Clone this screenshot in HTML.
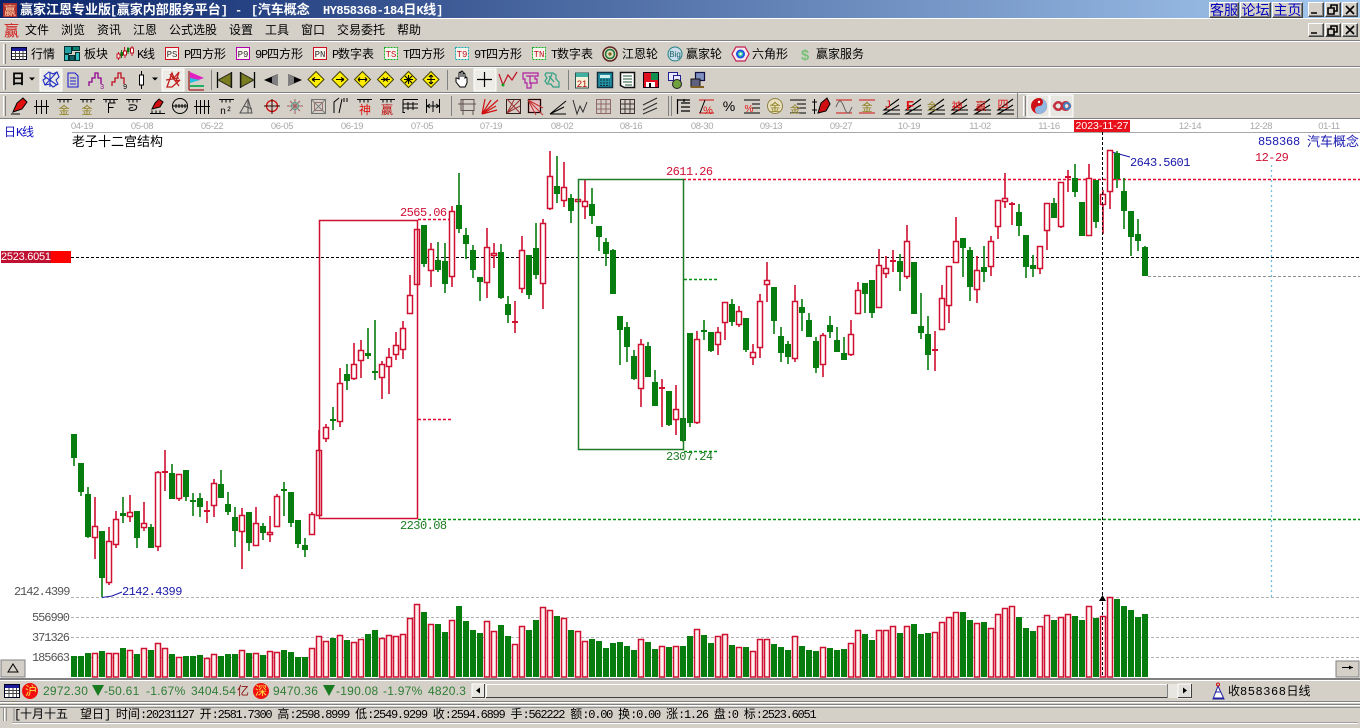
<!DOCTYPE html>
<html><head><meta charset="utf-8"><title>赢家江恩专业版</title>
<style>
html,body{margin:0;padding:0;background:#d4d0c8}
body{position:relative;width:1360px;height:728px;overflow:hidden;font:12px/14px "WenQuanYi Zen Hei","Noto Sans CJK SC",sans-serif;color:#000}
.t{position:absolute;white-space:pre;line-height:14px;font-size:12px}
.t b,b.m{font:12px/14px "Liberation Mono",monospace;letter-spacing:-1.23px;font-weight:normal}
.m{position:absolute;white-space:pre;font:12px/14px "Liberation Mono",monospace;letter-spacing:-.55px}
.d{position:absolute;top:121px;width:40px;text-align:center;font:9.5px/11px "Liberation Sans",sans-serif;letter-spacing:-.4px;color:#a8a8a8}
.r{position:absolute;left:0;width:1360px;box-sizing:border-box;background:#d4d0c8;border-top:1px solid #fff;border-bottom:1px solid #808080}
.w{position:absolute;box-sizing:border-box;background:#d4d0c8;border:1px solid;border-color:#fff #404040 #404040 #fff;box-shadow:inset -1px -1px 0 #808080;font-size:14px;line-height:14px;color:#0000c0;text-align:center}
.g{position:absolute;white-space:pre;font:12px/14px "Liberation Sans",sans-serif;letter-spacing:.25px;color:#2f7d35}
.bt{position:absolute;font:bold 13px/15px "WenQuanYi Zen Hei","Noto Sans CJK SC",sans-serif;color:#fff;white-space:pre;top:1px}
.bt b{font:bold 12px/15px "Liberation Mono",monospace;letter-spacing:-.5px}
svg{position:absolute;left:0;top:0}
</style></head><body>
<div style="position:absolute;left:0;top:0;width:1360px;height:18px;background:linear-gradient(90deg,#0a246a,#a6caf0)"></div>
<div class="bt" style="left:20px">赢家江恩专业版</div>
<div class="bt" style="left:110px"><b>[</b>赢家内部服务平台<b>]</b></div>
<div class="bt" style="left:235px"><b>-</b></div>
<div class="bt" style="left:251px"><b>[</b>汽车概念</div>
<div class="bt" style="left:323px"><b>HY858368-184</b>日<b>K</b>线<b>]</b></div>
<div class="r" style="top:18px;height:23px"></div>
<div class="r" style="top:41px;height:26px"></div>
<div class="r" style="top:67px;height:26px"></div>
<div class="r" style="top:93px;height:26px"></div>
<div style="position:absolute;left:0;top:119px;width:1360px;height:560px;background:#fff"></div>
<div style="position:absolute;left:0;top:678px;width:1360px;height:2px;background:#808080"></div>
<div class="w" style="left:1209px;top:2px;width:30px;height:16px">客服</div>
<div class="w" style="left:1240px;top:2px;width:31px;height:16px">论坛</div>
<div class="w" style="left:1272px;top:2px;width:31px;height:16px">主页</div>
<div class="w" style="left:1308px;top:2px;width:16px;height:15px"></div>
<div class="w" style="left:1325px;top:2px;width:16px;height:15px"></div>
<div class="w" style="left:1342px;top:2px;width:16px;height:15px"></div>
<div class="w" style="left:1308px;top:23px;width:16px;height:14px"></div>
<div class="w" style="left:1325px;top:23px;width:16px;height:14px"></div>
<div class="w" style="left:1342px;top:23px;width:16px;height:14px"></div>
<div class="t" style="left:25px;top:23px">文件</div><div class="t" style="left:61px;top:23px">浏览</div><div class="t" style="left:97px;top:23px">资讯</div><div class="t" style="left:133px;top:23px">江恩</div><div class="t" style="left:169px;top:23px">公式选股</div><div class="t" style="left:229px;top:23px">设置</div><div class="t" style="left:265px;top:23px">工具</div><div class="t" style="left:301px;top:23px">窗口</div><div class="t" style="left:337px;top:23px">交易委托</div><div class="t" style="left:397px;top:23px">帮助</div>
<div class="t" style="left:31px;top:47px">行情</div><div class="t" style="left:84px;top:47px">板块</div><div class="t" style="left:137px;top:47px"><b>K</b>线</div><div class="t" style="left:184px;top:47px"><b>P</b>四方形</div><div class="t" style="left:255px;top:47px"><b>9P</b>四方形</div><div class="t" style="left:332px;top:47px"><b>P</b>数字表</div><div class="t" style="left:403px;top:47px"><b>T</b>四方形</div><div class="t" style="left:474px;top:47px"><b>9T</b>四方形</div><div class="t" style="left:551px;top:47px"><b>T</b>数字表</div><div class="t" style="left:622px;top:47px">江恩轮</div><div class="t" style="left:686px;top:47px">赢家轮</div><div class="t" style="left:752px;top:47px">六角形</div><div class="t" style="left:816px;top:47px">赢家服务</div>
<div class="t" style="left:11px;top:72px;font-size:14px;font-weight:bold">日</div>
<svg width="1360" height="728" viewBox="0 0 1360 728">
<!-- window glyphs -->
<g fill="none" stroke="#000" stroke-width="1.6">
<path d="M1311 13h6M1328 8h6v6h-6zM1331 8v-3h6v6h-3M1346 6l8 8M1354 6l-8 8"/>
<path d="M1311 33h6M1328 29h6v6h-6zM1331 29v-3h6v6h-3M1346 26l8 8M1354 26l-8 8"/>
</g>
<rect x="3" y="3" width="14" height="14" fill="#b03030"/><text x="4" y="15" font-size="12" fill="#ffd0a0" font-family="WenQuanYi Zen Hei,sans-serif">赢</text>
<text x="4" y="36" font-size="15" fill="#d01818" font-family="Noto Sans CJK SC,sans-serif">赢</text>
<!-- grippers -->
<g fill="#fff"><rect x="3" y="44" width="1" height="20"/><rect x="3" y="70" width="1" height="20"/><rect x="3" y="96" width="1" height="20"/><rect x="1023" y="96" width="1" height="20"/></g>
<g fill="#808080"><rect x="5" y="44" width="1" height="20"/><rect x="5" y="70" width="1" height="20"/><rect x="5" y="96" width="1" height="20"/><rect x="1025" y="96" width="1" height="20"/><rect x="211" y="70" width="1" height="20"/><rect x="447" y="70" width="1" height="20"/><rect x="568" y="70" width="1" height="20"/><rect x="451" y="96" width="1" height="20"/><rect x="668" y="96" width="1" height="20"/><rect x="671" y="96" width="1" height="20"/><rect x="1017" y="93" width="1" height="26"/></g>
<!-- row1 icons -->
<rect x="11.5" y="47.5" width="15" height="12" fill="#fff" stroke="#000020"/><rect x="12" y="48" width="14" height="3" fill="#1a1a9a"/><path d="M12 53.5h14M12 56.5h14M15.5 51v9M19.5 51v9M23 51v9" stroke="#444" fill="none"/>
<g stroke="#003030"><rect x="64.5" y="46.5" width="7" height="7" fill="#20a0a0"/><rect x="72.5" y="46.5" width="7" height="4" fill="#108070"/><rect x="64.5" y="54.5" width="4" height="6" fill="#30c0c0"/><rect x="69.5" y="55.5" width="5" height="5" fill="#106060"/><rect x="75.5" y="52.5" width="4" height="8" fill="#30c0c0"/></g>
<g stroke="#c01020" fill="#fff"><path d="M118.5 52v8M125 50v8M132 46v10M124.500 47v4" fill="none"/><rect x="117" y="54" width="3" height="4"/><rect x="123.500" y="51" width="3" height="4"/><rect x="130.500" y="48" width="3" height="5"/></g><path d="M121.500 50v8M128 47v7" stroke="#0a7a10"/><rect x="120.500" y="52" width="2.500" height="4" fill="#0a7a10"/><rect x="127" y="48" width="2.500" height="4" fill="#0a7a10"/>
<g font-family="Liberation Mono,monospace" font-size="9" text-anchor="middle" fill="#505050">
<rect x="165.500" y="47.500" width="13" height="12" fill="#f8f4ee" stroke="#d01020"/><text x="172" y="57" fill="#303030">PS</text>
<rect x="236.500" y="47.500" width="13" height="12" fill="#f8f4ee" stroke="#b000b0"/><text x="243" y="57" fill="#303030">P9</text>
<rect x="313.500" y="47.500" width="13" height="12" fill="#f8f4ee" stroke="#d01020"/><text x="320" y="57" fill="#303030">PN</text>
<rect x="384.500" y="47.500" width="13" height="12" fill="#f8f4ee" stroke="#10b020" stroke-dasharray="2 1"/><text x="391" y="57" fill="#c01020">TS</text>
<rect x="455.500" y="47.500" width="13" height="12" fill="#f8f4ee" stroke="#10b0b0" stroke-dasharray="2 1"/><text x="462" y="57" fill="#c01020">T9</text>
<rect x="532.500" y="47.500" width="13" height="12" fill="#f8f4ee" stroke="#10b020" stroke-dasharray="2 1"/><text x="539" y="57" fill="#c01020">TN</text>
</g>
<circle cx="610" cy="54" r="7" fill="#ddb" stroke="#602020" stroke-width="1.500"/><circle cx="610" cy="54" r="4.500" fill="none" stroke="#207040" stroke-width="1.500"/><circle cx="610" cy="54" r="1.600" fill="#806020"/>
<circle cx="675" cy="54" r="7" fill="#cde" stroke="#208080"/><text x="675" y="57" font-size="8" text-anchor="middle" fill="#106060" font-family="Liberation Sans,sans-serif">Big</text>
<path d="M736 47h9l4 7-4 7h-9l-4-7z" fill="#f8e8f0" stroke="#c02050" stroke-width="1.200"/><circle cx="740.500" cy="54" r="4.500" fill="#2050e0"/><circle cx="740.500" cy="54" r="2.600" fill="#40d0a0"/><circle cx="740.500" cy="54" r="1.200" fill="#ffe"/>
<text x="805" y="60" font-size="15" font-weight="bold" text-anchor="middle" fill="#78c078" font-family="Liberation Sans,sans-serif">$</text>
<!-- row2 -->
<path d="M29 77.500h6l-3 3z" fill="#000"/><path d="M152 77.500h6l-3 3z" fill="#000"/>
<rect x="40" y="69" width="22" height="22" fill="#eeece6" stroke="#fff"/><rect x="162" y="69" width="22" height="22" fill="#eeece6" stroke="#fff"/><rect x="474" y="69" width="22" height="22" fill="#eeece6" stroke="#fff"/>
<path d="M44 76l5-4 4 2 4-2 2 5-3 3 2 4-5 3-3-3-5 1-2-5 3-2zM44 76l13 9M57 72l-12 13M50 73v14" fill="none" stroke="#2030c0" stroke-width="1.100"/>
<path d="M68 73h7l3 3v11H68zM70 78h6M70 81h6M70 84h6" fill="none" stroke="#2020d0" stroke-width="1.100"/>
<path d="M89 86v-4h3v-4h3v-5h3v5h3v6" fill="none" stroke="#900090" stroke-width="1.300"/><text x="100" y="89" font-size="7" fill="#900090" font-family="Liberation Mono,monospace">3</text>
<path d="M112 86v-4h3v-4h3v-5h3v5h3v6" fill="none" stroke="#c01020" stroke-width="1.300"/><text x="123" y="89" font-size="7" fill="#000" font-family="Liberation Mono,monospace">9</text>
<path d="M141.500 71v4M141.500 85v4" stroke="#000"/><rect x="139.500" y="75" width="4" height="10" fill="#fff" stroke="#000"/>
<path d="M167 87l5-14 2 5 5-6-3 9 4-1-8 7zM170 74l9 12M166 80l13-2" fill="none" stroke="#c02020" stroke-width="1.300"/>
<path d="M189 71v19M189 90h15" stroke="#a02020" stroke-width="1.300" fill="none"/><path d="M190 72l14 6-14 5z" fill="#e020c0"/><path d="M190 78l10 2-10 3z" fill="#20c0e0"/><path d="M190 85h14v2h-14z" fill="#20b060"/>
<path d="M217.500 72v16M231.500 72v16" stroke="#000" stroke-width="1.300" fill="none"/><path d="M231 73v14l-13-7z" fill="#7c7c20" stroke="#303020"/><path d="M240.500 72v16M254.500 72v16" stroke="#000" stroke-width="1.300" fill="none"/><path d="M241 73v14l13-7z" fill="#7c7c20" stroke="#303020"/>
<path d="M264 80l14-6v12z" fill="#000"/><path d="M272 77l6-3v12l-6-3z" fill="#808080"/><path d="M288 74l14 6-14 6z" fill="#000"/><path d="M288 74l6 3v6l-6 3z" fill="#808080"/>
<g fill="#ffee00" stroke="#404000"><path d="M316 71.500l8 8-8 8-8-8z"/><path d="M340 71.500l8 8-8 8-8-8z"/><path d="M362.500 71.500l8 8-8 8-8-8z"/><path d="M385.500 71.500l8 8-8 8-8-8z"/><path d="M408.500 71.500l8 8-8 8-8-8z"/><path d="M431 71.500l8 8-8 8-8-8z"/></g>
<g fill="none" stroke="#000" stroke-width="1.100"><path d="M312 79.500h8M312 79.500l3-2M312 79.500l3 2"/><path d="M336 79.500h8M344 79.500l-3-2M344 79.500l-3 2"/><path d="M358 79.500h9M358 79.500l2-2M358 79.500l2 2M367 79.500l-2-2M367 79.500l-2 2"/><path d="M381 79.500h9M383 77.500l5 4M383 81.500l5-4"/><path d="M404 79.500h9M408.500 75v9M405 76l7 7M412 76l-7 7"/><path d="M431 75v9M427 79.500h8M431 75l-2 2M431 75l2 2M431 84l-2-2M431 84l2-2"/></g>
<path d="M456 78v4l4 5h5l2-4v-5l-1-1-1 1v-4l-1-1-1 1v3-5l-1-1-1 1v5-4l-1-1-1 1v6l-2-1z" fill="#fff" stroke="#000"/>
<path d="M484.500 72v15M477 79.500h15" stroke="#000" stroke-width="1.200"/>
<path d="M499 74l4 11 5-10 4 5 5-8" fill="none" stroke="#c01020" stroke-width="1.200"/><circle cx="503" cy="85" r="1.500" fill="#10a020"/>
<path d="M523 73h15v3h-3v3h2v4h-6v5h-4v-5h-2v-4h-2zM526 76h8M530 76v8" fill="none" stroke="#b020a0" stroke-width="1.200"/>
<path d="M546 73h7l3 2v4l3 3v5h-6l-2-3h-4l-2-3 2-3-2-3zM549 76l5 6M552 74l-4 9" fill="none" stroke="#30a080" stroke-width="1.200"/>
<rect x="575.500" y="73" width="13" height="15" fill="#f8f0d8" stroke="#305050"/><rect x="576" y="73" width="12" height="4" fill="#40b0a0"/><text x="582" y="87" text-anchor="middle" font-size="9.500" font-family="Liberation Sans,sans-serif" fill="#b01010">21</text>
<rect x="597.500" y="72.500" width="15" height="15" fill="#2090a0" stroke="#103040" stroke-width="1.500"/><rect x="600" y="75" width="10" height="3" fill="#d0f0f0"/><path d="M600 80h10M600 83h10M600 85.500h10" stroke="#103040" stroke-dasharray="2 1"/>
<path d="M620.500 72.500h14v15h-10l-4-2z" fill="#fff" stroke="#101010" stroke-width="1.500"/><path d="M623 76h9M623 79h9M623 82h9M625 85h7" stroke="#205030"/>
<rect x="643.500" y="72.500" width="15" height="15" fill="#e01020" stroke="#100010"/><rect x="651" y="73" width="7" height="7" fill="#109050"/><rect x="646" y="82" width="9" height="5" fill="#fff"/><rect x="649" y="83" width="2" height="4" fill="#000"/>
<rect x="668.500" y="72.500" width="9" height="8" fill="#e8e8ff" stroke="#202090"/><rect x="673.500" y="75.500" width="7" height="6" fill="#e8e8ff" stroke="#202090"/><circle cx="677" cy="84" r="4.500" fill="#70a040" stroke="#202020"/>
<rect x="695.500" y="72.500" width="9" height="8" fill="#8090c0" stroke="#101040" stroke-width="1.200"/><rect x="691" y="79" width="9" height="8" fill="#606080" stroke="#101010"/><path d="M691 87h13" stroke="#806020" stroke-width="2"/>
<!-- row3 -->
<g font-family="WenQuanYi Zen Hei,Noto Sans CJK SC,sans-serif" text-anchor="middle">
<path d="M13 112l4-9 6-5 4 4-5 7z" fill="#e01010" stroke="#000"/><path d="M11 114h9" stroke="#000"/>
<path d="M36.500 100v14M41.500 100v14M46.500 100v14M34 106.500h15M57 99.500h15M60 99.500v3M64 99.500v3M68 99.500v3M80 99.500h15M83 99.500v3M87 99.500v3M91 99.500v3" stroke="#000" fill="none"/>
<text x="64" y="114" font-size="11" fill="#908020">金</text><text x="87" y="114" font-size="11" fill="#908020">金</text>
<path d="M103 99.500h15M106 99.500v3M110 99.500v3M114 99.500v3M108.500 103v10M108.500 103h7M108.500 107.500h5M126 99.500h15M129 99.500v3M133 99.500v3M137 99.500v3M129 105c7 -1 9 1 7 4-2 2-7 2-7 0 0-1 3-2 4-1" stroke="#000" fill="none"/>
<path d="M152 109l3-6 4-4 4 3-3 5z" fill="#d01010" stroke="#000"/><path d="M150 113.500h15M152 113.500v-3M156 113.500v-3M160 113.500v-3" stroke="#000" fill="none"/>
<circle cx="180" cy="106" r="7.500" fill="none" stroke="#000"/><path d="M173 106h14M176 104v4M179 104v4M182 104v4M185 104v4M203 100v0" stroke="#000" fill="none"/>
<path d="M196.500 100v14M200.500 100v14M204.500 100v14M208.500 100v14M194 106.500h16M219 99.500h15M222 99.500v3M226 99.500v3M230 99.500v3" stroke="#000" fill="none"/><text x="226" y="114" font-size="10" fill="#000" font-family="Liberation Mono,monospace">n²</text>
<path d="M240 113l8-14 4 14zM244 106l8 3M248 99v14" fill="none" stroke="#505050"/>
<circle cx="272" cy="106" r="5.500" fill="none" stroke="#d01010" stroke-width="1.300"/><path d="M264 106h16M272 99v15" stroke="#300" /><path d="M295 99v15M287 106h16M290 101l10 10M300 101l-10 10" stroke="#a06060"/><circle cx="295" cy="106" r="3.500" fill="none" stroke="#50a090"/>
<rect x="311.500" y="99.500" width="14" height="14" fill="none" stroke="#707070"/><rect x="314.500" y="102.500" width="8" height="8" fill="none" stroke="#a07070"/><path d="M311 99l15 15M326 99l-15 15" stroke="#808080"/>
<path d="M334 113v-11l5-4M339 113l3-14M344 98v4M347 98v4" stroke="#000" fill="none"/>
<path d="M357 99.500h15M360 99.500v3M364 99.500v3M368 99.500v3M380 99.500h15M383 99.500v3M387 99.500v3M391 99.500v3M403 99.500h15M403 99.500v13h2M408 102v8M413 102v8M403 104h15M403 108h15" stroke="#000" fill="none"/><text x="365" y="114" font-size="12" fill="#e01010">神</text><text x="387" y="114" font-size="12" fill="#c01010">赢</text>
<path d="M426.500 99v14M439.500 99v14M426 106h14M427 106l3-2M427 106l3 2M439 106l-3-2M439 106l-3 2M433 101v11" stroke="#000" fill="none"/>
<path d="M461 99.500h13v11h-13zM463 99v16M473 110v5M458 104h18" stroke="#605050" fill="none"/>
<path d="M482 114l16-14M482 114l14-8M482 114l15-4M482 114l9-14M482 114l3-15" stroke="#d01010" stroke-width="1.200"/>
<path d="M506.500 99.500h14v14h-14z" fill="none" stroke="#302020"/><path d="M507 113l13-13M507 113l13-7M507 113l7-13M507 99l13 14" stroke="#a03030"/>
<path d="M528.500 99.500h12v13h-12z" fill="#e8c0c0" stroke="#200000" stroke-width="1.300"/><path d="M528 100l15 15M528 100l15 8M528 100l8 15" stroke="#c03030"/>
<path d="M550 114l16-13M550 114l14-7M550 114h16" stroke="#000" fill="none"/><path d="M573 100l4 14 3-8 3 6 4-10" stroke="#303030" fill="none"/>
<path d="M596.500 99.500h14v14h-14zM601 99v15M606 99v15M596 104h15M596 109h15" stroke="#906868" fill="none"/><path d="M620.500 99.500h14v14h-14zM625 99v15M630 99v15M620 104h15M620 109h15" stroke="#403030" fill="none"/>
<path d="M643 105l14-7M643 110l14-7M643 114l14-6" stroke="#303030" fill="none" stroke-width="1.200"/>
<path d="M677.500 99v15M677 100h13M681 103h9M681 107h9M681 111h9M684 99v3" stroke="#000" fill="none" stroke-width="1.200"/>
<path d="M699 100h15M699 113h15" stroke="#d01010"/><path d="M705 100l-5 13" stroke="#000"/><text x="708" y="114" font-size="11" fill="#e01010" font-family="Liberation Sans,sans-serif">%</text>
<text x="729" y="111" font-size="14" fill="#000" font-family="Liberation Sans,sans-serif">%</text>
<path d="M744 100h16M752 104h8M752 108h8M744 113h16" stroke="#000"/><text x="749" y="112" font-size="10" fill="#e01010" font-family="Liberation Sans,sans-serif">%</text>
<circle cx="775" cy="106" r="7.500" fill="#e8e0c0" stroke="#908040"/><text x="775" y="111" font-size="11" fill="#908020">金</text>
<path d="M790 100h16M797 104h9M797 108h9M790 113h16" stroke="#000"/><text x="795" y="113" font-size="10" fill="#908020">金</text>
<path d="M814.500 99v15M812 102h5M812 110h5" stroke="#000"/><path d="M818 113l3-10 6-5 3 6-4 7z" fill="#d01010" stroke="#000"/>
<path d="M836 100h16M836 113h16" stroke="#d01010"/><path d="M836 107c3-8 5-8 8 0s5 8 8 0" stroke="#606060" fill="none"/>
<path d="M859 100h16M859 113h16" stroke="#d01010"/><text x="867" y="111" font-size="11" fill="#908020">金</text>
<path d="M899 99l-15 11 16 0M899 105l-15 9 16 0" stroke="#000" fill="none" stroke-width="1.100"/><text x="888" y="108" font-size="11" fill="#e01010" font-family="Liberation Sans,sans-serif">J</text>
<path d="M921 99l-15 11 16 0M921 105l-15 9 16 0" stroke="#000" fill="none" stroke-width="1.100"/><text x="910" y="110" font-size="13" font-weight="bold" fill="#e01010" font-family="Liberation Sans,sans-serif">F</text>
<path d="M944 99l-15 11 16 0M944 105l-15 9 16 0" stroke="#000" fill="none" stroke-width="1.100"/><text x="932" y="110" font-size="10" fill="#908020">金</text>
<path d="M967 99l-15 11 16 0M967 105l-15 9 16 0" stroke="#000" fill="none" stroke-width="1.100"/><text x="957" y="110" font-size="11" fill="#e01010">神</text>
<path d="M990 99l-15 11 16 0M990 105l-15 9 16 0" stroke="#000" fill="none" stroke-width="1.100"/><text x="981" y="110" font-size="11" fill="#d01010">赢</text>
<path d="M1013 99l-15 11 16 0M1013 105l-15 9 16 0" stroke="#000" fill="none" stroke-width="1.100"/><text x="1003" y="108" font-size="11" fill="#e01010">四</text>
</g>
<rect x="1027" y="95" width="22" height="22" fill="#e8e6e0" stroke="#fff"/><rect x="1050" y="95" width="23" height="22" fill="#e8e6e0" stroke="#fff"/>
<circle cx="1039" cy="106" r="8" fill="#d01018"/><path d="M1039 98a8 8 0 0 1 0 16a4 4 0 0 1 0-8a4 4 0 0 0 0-8z" fill="#90b8e0"/><circle cx="1039" cy="102" r="1.200" fill="#fff"/>
<path d="M1054 106c2-5 7-5 8 0s6 5 8 0c-2-5-7-5-8 0s-6 5-8 0z" fill="none" stroke="#c03040" stroke-width="2.500"/><circle cx="1067" cy="106" r="3" fill="none" stroke="#4080c0" stroke-width="2"/>
<!-- chart lines -->
<rect x="1074" y="120" width="56" height="12" fill="#e8101a"/>
<path d="M72 132.500H1360" stroke="#a8a8a8" fill="none"/>
<g fill="none" stroke-dasharray="3 2">
<path d="M71 257.500H1360" stroke="#000"/>
<path d="M683 179.500H1360" stroke="#e8002c" stroke-width="1.500"/>
<path d="M418 519.500H1360" stroke="#009010" stroke-width="1.500"/>
<path d="M418 219.500H450M418 419.500H452" stroke="#e8002c" stroke-width="1.500"/>
<path d="M684 279.500H718M684 451.500H718" stroke="#009010" stroke-width="1.500"/>
<path d="M1148 276.500H1360" stroke="#909090"/>
<path d="M71 597.500H1360M71 617.500H1360M71 637.500H1360M71 657.500H1360" stroke="#b0b0b0"/>
<path d="M1271.500 165V597" stroke="#70c0e0" stroke-dasharray="2 3" stroke-width="1.300"/>
</g>
<path d="M102 597.500L112 596 122 592M1108 151l22 6" fill="none" stroke="#1818a8"/>
<g id="k"></g>
<rect x="319.500" y="220.500" width="98" height="298" fill="none" stroke="#d01030" stroke-width="1.500"/>
<rect x="578.500" y="179.500" width="105" height="270" fill="none" stroke="#1f7a28" stroke-width="1.500"/>
<path d="M1102.500 132V677" stroke="#000" stroke-dasharray="3 2" fill="none"/><path d="M1099 601l3.500-6 3.500 6z" fill="#000"/>
<!-- buttons -->
<rect x="1" y="660" width="24" height="17" fill="#d4d0c8" stroke="#808080"/><path d="M8 672l5-8 5 8z" fill="none" stroke="#000"/>
<rect x="1336" y="661" width="23" height="16" fill="#d4d0c8" stroke="#808080"/><path d="M1342 667.500h11" stroke="#000" fill="none"/><path d="M1353 667.500l-4-2v4z" fill="#000"/>
<!-- status bars -->
<rect x="0" y="680" width="1360" height="48" fill="#d4d0c8"/>
<path d="M0 680.500H1360M0 702.500H1360M0 705.500H1360" stroke="#fff" fill="none"/><path d="M0 701.500H1360M0 704.500H1360" stroke="#808080" fill="none"/>
<path d="M0 707.500H1360M14 708v13" stroke="#909090" fill="none"/><path d="M12 723.500H1358" stroke="#fff"/><path d="M12 722.500H1358" stroke="#a0a0a0"/>
<rect x="4.500" y="684.500" width="15" height="13" fill="#fff" stroke="#000020"/><rect x="5" y="685" width="14" height="3" fill="#1a1a9a"/><path d="M5 690.500h14M5 693.500h14M9 688v9M13 688v9M16.500 688v9" stroke="#444" fill="none"/>
<circle cx="30" cy="691" r="8" fill="#f01010"/><circle cx="261" cy="691" r="8" fill="#f01010"/>
<path d="M92 685h12l-6 11z" fill="#1a7a20"/><path d="M323 685h12l-6 11z" fill="#1a7a20"/>
<rect x="472" y="684" width="13" height="14" fill="#e8e6e0" stroke="#fff"/><path d="M472 697.500h13M484.500 684v14" stroke="#404040"/><path d="M476 690.500l4-3v6z" fill="#000"/>
<path d="M486 684.500H1168M486.500 684v14" stroke="#fff" stroke-width="1"/><path d="M486 697.500H1168" stroke="#404040"/><path d="M1167.500 684v14" stroke="#808080"/>
<rect x="1168" y="684" width="10" height="14" fill="#e8e6e0"/>
<rect x="1178" y="684" width="13" height="14" fill="#e0deda" stroke="#fff"/><path d="M1178 697.500h13M1191.500 684v14" stroke="#404040"/><path d="M1187 690.500l-4-3v6z" fill="#000"/>
<path d="M1218 686l-5 13h11zM1215 692h6M1213 698h11" fill="#fff" stroke="#2020a0"/><circle cx="1218" cy="684.500" r="1.500" fill="none" stroke="#d01010"/>
<path d="M3.500 708v13M6.500 708v13" stroke="#909090" fill="none"/><path d="M4.500 708v13" stroke="#fff" fill="none"/>
</svg>
<!-- labels -->
<div class="d" style="left:62px">04-19</div><div class="d" style="left:122px">05-08</div><div class="d" style="left:192px">05-22</div><div class="d" style="left:262px">06-05</div><div class="d" style="left:332px">06-19</div><div class="d" style="left:402px">07-05</div><div class="d" style="left:471px">07-19</div><div class="d" style="left:542px">08-02</div><div class="d" style="left:611px">08-16</div><div class="d" style="left:682px">08-30</div><div class="d" style="left:751px">09-13</div><div class="d" style="left:821px">09-27</div><div class="d" style="left:889px">10-19</div><div class="d" style="left:960px">11-02</div><div class="d" style="left:1029px">11-16</div><div class="d" style="left:1170px">12-14</div><div class="d" style="left:1241px">12-28</div><div class="d" style="left:1309px">01-11</div>
<div class="d" style="left:1074px;width:56px;top:120px;color:#fff;font-size:10.500px;line-height:12px;letter-spacing:0">2023-11-27</div>
<div class="t" style="left:4px;top:125px;color:#1010c0">日<b>K</b>线</div>
<div class="t" style="left:72px;top:134px;font-size:13px">老子十二宫结构</div>
<div class="m" style="left:1258px;top:135px;color:#1818b0;letter-spacing:-.2px">858368</div>
<div class="t" style="left:1307px;top:134px;color:#1818b0;font-size:13px">汽车概念</div>
<div class="m" style="left:1255px;top:151px;color:#d01035">12-29</div>
<div class="m" style="left:1130px;top:156px;color:#1818a8">2643.5601</div>
<div class="m" style="left:122px;top:585px;color:#1818a8">2142.4399</div>
<div class="m" style="left:400px;top:206px;color:#d01035">2565.06</div>
<div class="m" style="left:666px;top:165px;color:#d01035">2611.26</div>
<div class="m" style="left:400px;top:519px;color:#1a7a20">2230.08</div>
<div class="m" style="left:666px;top:450px;color:#1a7a20">2307.24</div>
<div class="m" style="left:14px;top:585px;color:#555;letter-spacing:-1.05px">2142.4399</div>
<div class="m" style="left:32px;top:611px;color:#555;letter-spacing:-1.05px">556990</div>
<div class="m" style="left:32px;top:631px;color:#555;letter-spacing:-1.05px">371326</div>
<div class="m" style="left:32px;top:651px;color:#555;letter-spacing:-1.05px">185663</div>
<div style="position:absolute;left:1px;top:251px;width:70px;height:12px;background:#f00"></div>
<div class="m" style="left:1px;top:251px;width:50px;height:12px;overflow:hidden;background:#c01030;color:#fff;font:11px/12px 'Liberation Sans',sans-serif;letter-spacing:-.25px">2523.6051</div>
<!-- status 1 -->
<div class="t" style="left:25px;top:684px;color:#ffe040">沪</div>
<div class="t" style="left:255px;top:684px;color:#ffe040">深</div>
<div class="g" style="left:43px;top:684px">2972.30</div>
<div class="g" style="left:104px;top:684px">-50.61</div>
<div class="g" style="left:146px;top:684px">-1.67%</div>
<div class="g" style="left:191px;top:684px">3404.54</div>
<div class="t" style="left:237px;top:684px;color:#8a1010">亿</div>
<div class="g" style="left:273px;top:684px">9470.36</div>
<div class="g" style="left:336px;top:684px">-190.08</div>
<div class="g" style="left:383px;top:684px">-1.97%</div>
<div class="g" style="left:428px;top:684px">4820.3</div>
<div class="t" style="left:1228px;top:684px">收<b style="letter-spacing:.55px">858368</b>日线</div>
<div class="t" style="left:14px;top:707px"><b>[</b>十月十五<b>  </b>望日<b>] </b>时间<b>:20231127 </b>开<b>:2581.7300 </b>高<b>:2598.8999 </b>低<b>:2549.9299 </b>收<b>:2594.6899 </b>手<b>:562222 </b>额<b>:0.00 </b>换<b>:0.00 </b>涨<b>:1.26 </b>盘<b>:0 </b>标<b>:2523.6051</b></div>
<script>
var D="0 434 434 458 466 656|0 463 463 492 496 656|0 487 494 537 538 653|1 497 526 538 559 653|0 531 531 578 597 651|1 527 541 583 585 653|1 511 519 545 548 653|0 497 513 516 523 648|1 495 512 517 522 650|0 511 511 538 548 654|1 502 523 528 531 648|0 524 527 548 548 650|1 471 472 547 551 643|1 450 471 472 491 648|0 464 473 499 499 654|1 474 474 499 501 657|0 470 470 497 501 656|0 493 500 502 516 656|0 493 498 507 517 655|1 501 510 511 523 658|1 479 483 506 517 654|0 470 484 498 498 656|0 492 504 512 515 654|0 507 517 531 547 654|1 508 515 532 569 650|0 512 512 543 551 653|1 507 523 546 546 653|0 523 526 533 540 655|1 516 532 535 542 651|1 494 496 527 527 652|0 482 489 490 516 650|0 492 492 523 527 652|0 520 520 544 548 657|0 538 545 550 557 657|1 512 514 535 535 648|1 430 450 516 516 636|1 424 427 439 442 641|0 407 419 420 430 638|1 368 383 422 427 635|0 364 374 381 390 640|1 343 364 379 380 642|1 340 350 361 378 639|0 328 353 356 359 634|0 320 371 372 380 630|1 361 364 378 399 638|1 348 357 367 394 635|1 332 345 355 360 636|1 321 328 350 359 634|1 275 295 314 314 618|1 229 229 285 285 604|0 225 225 264 267 612|1 243 249 271 287 624|0 242 260 270 272 624|0 243 261 284 293 632|1 206 211 277 287 620|0 173 205 229 233 606|0 228 235 244 259 621|0 245 250 270 278 630|0 277 277 282 301 633|1 228 247 283 298 621|1 243 253 256 268 631|0 244 252 298 299 625|0 296 304 315 323 636|1 301 321 322 333 644|1 236 250 289 293 626|0 255 255 295 299 630|0 223 248 275 279 620|1 219 223 284 309 607|1 151 176 209 210 610|0 156 186 194 203 616|1 162 187 201 207 618|0 194 198 211 223 630|1 199 199 202 202 631|1 179 201 207 219 641|0 188 204 216 224 639|0 226 226 237 251 641|0 238 242 254 266 648|0 249 250 294 294 643|0 316 316 330 365 642|0 322 327 347 362 646|0 350 356 379 380 650|1 339 344 389 407 639|0 342 346 377 377 642|0 370 382 406 406 649|1 379 387 388 427 646|0 391 391 425 426 647|1 385 409 420 435 646|0 418 418 441 442 646|0 333 333 423 427 636|1 331 339 423 424 629|0 320 330 331 340 635|0 332 332 351 352 643|1 327 332 345 355 636|1 302 302 323 340 634|0 299 304 322 326 645|1 306 311 325 327 647|0 318 318 350 352 647|1 344 352 358 365 651|1 294 301 348 358 639|1 262 280 285 302 639|0 287 287 321 334 644|0 327 336 353 362 647|0 341 344 357 364 650|1 285 301 359 362 636|0 299 307 313 331 646|0 313 320 337 337 650|0 337 341 368 373 651|1 333 335 365 377 647|0 316 325 332 338 648|0 327 340 352 352 650|0 337 353 360 360 649|1 320 334 355 356 643|1 282 290 314 314 630|0 283 283 294 313 634|0 280 280 313 318 640|1 249 265 308 308 630|1 256 268 274 278 630|1 250 260 261 272 626|0 254 261 272 291 633|1 225 241 277 279 626|0 262 262 314 314 624|0 293 326 333 339 634|0 316 334 355 370 633|1 331 349 350 371 632|1 285 298 330 330 622|1 266 266 306 323 617|1 217 241 263 263 612|0 238 238 248 277 612|0 247 250 287 301 620|1 256 270 290 303 623|0 246 267 272 282 622|1 236 241 267 276 628|1 200 200 227 239 614|1 173 198 202 208 608|1 202 203 204 225 606|0 204 212 226 236 617|0 235 235 267 278 628|0 255 265 269 277 631|1 246 246 269 274 626|1 203 203 231 250 615|0 198 203 218 218 620|1 182 182 227 228 617|1 170 176 177 192 614|0 164 178 192 197 616|0 202 202 236 236 620|1 164 178 236 236 606|0 180 180 222 228 618|1 190 194 205 234 616|1 150 150 192 209 597|0 151 153 179 188 599|0 178 191 211 229 606|0 211 211 237 256 610|0 219 234 241 251 617|0 246 247 276 276 614";
var R="#d01030",G="#087d0f",h="";
D.split("|").forEach(function(s,i){
 var a=s.split(" ").map(Number),c=a[0],t=a[1],b=a[2],e=a[3],w=a[4],v=a[5],x=74+7*i,col=c?R:G;
 if(w>t)h+='<rect x="'+(x-.8)+'" y="'+t+'" width="1.6" height="'+(w-t)+'" fill="'+col+'"/>';
 if(e-b<2)h+='<rect x="'+(x-3)+'" y="'+b+'" width="6" height="2" fill="'+col+'"/>';
 else if(c)h+='<rect x="'+(x-2.5)+'" y="'+(b+.5)+'" width="5" height="'+(e-b-1)+'" fill="#fff" stroke="'+col+'" stroke-width="1.500"/>';
 else h+='<rect x="'+(x-3)+'" y="'+b+'" width="6" height="'+(e-b)+'" fill="'+col+'"/>';
 if(c)h+='<rect x="'+(x-2.5)+'" y="'+(v+.5)+'" width="5" height="'+(677-v-.5)+'" fill="#fdf0f0" stroke="'+col+'" stroke-width="1.500"/>';
 else h+='<rect x="'+(x-3)+'" y="'+v+'" width="6" height="'+(677-v)+'" fill="'+col+'"/>';
});
document.getElementById("k").innerHTML=h;
</script>
</body></html>
